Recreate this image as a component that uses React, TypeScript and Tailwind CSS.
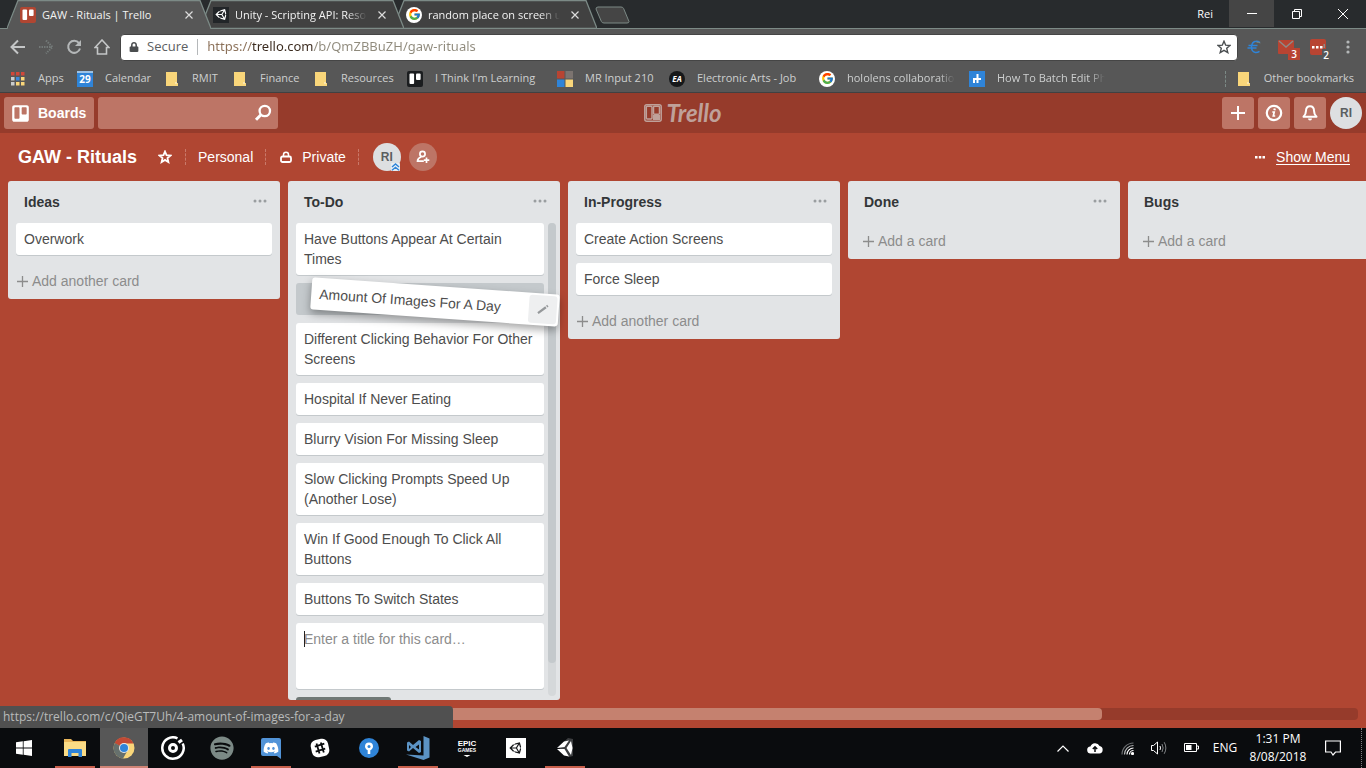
import React from 'react';
import { FaTrello, FaUnity, FaSpotify, FaDiscord, FaLock } from 'react-icons/fa';
import { FcGoogle } from 'react-icons/fc';

const UI_FONT = "font-['Open_Sans','Noto_Sans',sans-serif]";

function FolderIcon() {
  return (
    <svg width="12" height="14" viewBox="0 0 12 14" className="shrink-0">
      <path d="M0 0h11v11h1v3H0z" fill="#f9d67a" />
      <path d="M9 10h2v2h-2z" fill="#fbe6ae" />
    </svg>
  );
}

function TrelloTile({ dark = false }: { dark?: boolean }) {
  return (
    <svg width="16" height="16" viewBox="0 0 16 16" className="shrink-0">
      <rect width="16" height="16" rx="2" fill={dark ? '#1b1d1f' : '#b04632'} />
      <rect x="2.5" y="2.5" width="4.6" height="10.5" rx="1" fill="#fff" />
      <rect x="9" y="2.5" width="4.6" height="6.5" rx="1" fill="#fff" />
    </svg>
  );
}

function GoogleTile() {
  return (
    <span className="flex size-4 shrink-0 items-center justify-center rounded-full bg-white">
      <FcGoogle size={13} />
    </span>
  );
}

type TabData = { title: string; icon: React.ReactNode; active?: boolean; layer: string };

const tabs: TabData[] = [
  { title: 'GAW - Rituals | Trello', icon: <TrelloTile />, active: true, layer: 'z-30' },
  {
    title: 'Unity - Scripting API: Resources',
    icon: (
      <span className="flex size-4 shrink-0 items-center justify-center bg-[#222528] text-white">
        <FaUnity size={13} />
      </span>
    ),
    layer: 'z-20 -ml-[11px]',
  },
  { title: 'random place on screen unity', icon: <GoogleTile />, layer: 'z-10 -ml-[11px]' },
];

function Tab({ title, icon, active, layer }: TabData) {
  return (
    <div className={`relative flex h-full w-[204px] items-center pl-[13px] pr-4 ${layer}`}>
      <svg className="absolute inset-0" width="204" height="29" viewBox="0 0 204 29">
        <path d="M0 29L1 28 11 0.5H193L203.500 28.500V29z" fill={active ? '#575757' : '#414141'} />
        <path
          d={active ? 'M0 28.500L11 0.500H193L204 28.500' : 'M0 28.500L11 0.500H193L204 28.500H0'}
          fill="none"
          stroke="#7c8a86"
          strokeWidth="1.3"
        />
      </svg>
      <div className="relative flex min-w-0 flex-1 items-center">
        {icon}
        <a
          href="#"
          className={`ml-1.5 w-[132px] overflow-hidden whitespace-nowrap text-[11px] leading-4 text-[#f2f2f2] ${active ? '' : 'mask-r-from-85%'}`}
        >
          {title}
        </a>
        <button aria-label="Close tab" className="ml-auto flex h-4 w-3 items-center justify-center">
          <svg width="8" height="8" viewBox="0 0 8 8" stroke="#dcdcdc" strokeWidth="1.2">
            <path d="M0.500 0.500l7 7M7.500 0.500l-7 7" />
          </svg>
        </button>
      </div>
    </div>
  );
}

function TabStrip() {
  return (
    <div className="relative flex h-[29px] items-center bg-[#282b2d] pl-[7px]">
      <div className="absolute inset-x-0 bottom-0 h-px bg-[#7c8a86]" />
      {tabs.map((t) => (
        <Tab key={t.title} {...t} />
      ))}
      <button aria-label="New tab" className="-ml-0.5">
        <svg width="35" height="18" viewBox="0 0 35 18">
          <path d="M3 1h23q2 0 2.600 1.500l5.400 13q0 1.500-2 1.500H9q-2 0-2.600-1.500L1 3q0-2 2-2z" fill="#454545" stroke="#7c8a86" />
        </svg>
      </button>
      <div className="ml-auto flex h-full items-start text-white">
        <button className="mr-4 h-7 text-[11px]">Rei</button>
        <button aria-label="Minimize" className="flex h-[27px] w-[45px] items-center justify-center bg-[#454545]">
          <svg width="10" height="10" viewBox="0 0 10 10" stroke="#fff">
            <path d="M0 4.500h10" />
          </svg>
        </button>
        <button aria-label="Restore" className="flex h-[27px] w-[46px] items-center justify-center">
          <svg width="10" height="10" viewBox="0 0 10 10" stroke="#fff" fill="none">
            <path d="M0.500 2.500h7v7h-7zM2.500 2.500v-2h7v7h-2" />
          </svg>
        </button>
        <button aria-label="Close" className="flex h-[27px] w-[46px] items-center justify-center">
          <svg width="10" height="10" viewBox="0 0 10 10" stroke="#fff">
            <path d="M0 0l10 10M10 0L0 10" />
          </svg>
        </button>
      </div>
    </div>
  );
}

function Toolbar() {
  const nav = 'flex size-7 items-center justify-center';
  return (
    <div className="flex h-9 items-center bg-[#575757] pl-1 pr-1">
      <button aria-label="Back" className={nav}>
        <svg width="16" height="16" viewBox="0 0 16 16" fill="none" stroke="#c4c6c7" strokeWidth="2">
          <path d="M15 8H2M8 1.500L1.500 8 8 14.500" />
        </svg>
      </button>
      <button aria-label="Forward" className={nav}>
        <svg width="16" height="16" viewBox="0 0 16 16" fill="none" stroke="#737978" strokeWidth="2">
          <path d="M1 8h13M8 1.500L14.500 8 8 14.500" strokeDasharray="1.500 1" />
        </svg>
      </button>
      <button aria-label="Reload" className={nav}>
        <svg width="16" height="16" viewBox="0 0 16 16" fill="none" stroke="#b4b7b8" strokeWidth="2">
          <path d="M13 4.200A6 6 0 1 0 14 9.500" />
          <path d="M15 1v6H9z" fill="#b4b7b8" stroke="none" />
        </svg>
      </button>
      <button aria-label="Home" className={nav}>
        <svg width="16" height="16" viewBox="0 0 16 16" fill="none" stroke="#c4c6c7" strokeWidth="1.6">
          <path d="M8 1L1 8.500h2.500V15h9V8.500H15z" />
        </svg>
      </button>
      <div className="ml-1 flex h-[27px] min-w-0 flex-1 items-center rounded-sm border border-[#454545] bg-white pl-2 pr-1.5">
        <FaLock size={10} color="#4a4d4f" />
        <label htmlFor="url" className="ml-2 text-[13px] text-[#5c6062]">
          Secure
        </label>
        <span className="mx-[9px] h-4 w-px bg-[#b5b8ba]" />
        <input
          id="url"
          type="text"
          defaultValue="https://trello.com/b/QmZBBuZH/gaw-rituals"
          className="min-w-0 flex-1 bg-[linear-gradient(90deg,#8a6f57_45px,#3a2a1e_45px,#3a2a1e_106px,#8f8a7c_106px)] bg-clip-text font-['Noto_Sans',sans-serif] text-[13px] text-transparent outline-none"
        />
        <button aria-label="Bookmark this page">
          <svg width="14" height="14" viewBox="0 0 14 14" fill="none" stroke="#4a4e50" strokeWidth="1.400">
            <path d="M7 1.200l1.700 4 4.300.3-3.300 2.800 1.100 4.300L7 10.300l-3.800 2.300 1.100-4.300L1 5.500l4.300-.3z" />
          </svg>
        </button>
      </div>
      <div className="flex h-full items-center">
        <button aria-label="Currency converter" className="flex w-8 justify-center">
          <svg width="14" height="14" viewBox="0 0 14 14" fill="none" stroke="#2f84d8" strokeWidth="1.500">
            <path d="M13 2.500Q11 1 9 1.200 4.800 1.500 4.500 7q.2 5 4 5.500 2 .2 4-1.200M1.500 5.500h9M0.500 8h9" />
            <path d="M13.300 3Q11 1.800 9.500 2.200" stroke="#7c8a86" strokeWidth="1" />
          </svg>
        </button>
        <button aria-label="Mail, 3 unread" className="relative flex w-8 justify-center">
          <svg width="16" height="14" viewBox="0 0 16 14">
            <rect width="16" height="14" rx="1" fill="#b84432" />
            <path d="M1 1l7 6 7-6" fill="none" stroke="#8f8a86" strokeWidth="1.500" />
          </svg>
          <span className="absolute -bottom-1.5 right-0.5 h-3 w-3 bg-[#b84432] text-center text-[10px] font-semibold leading-3 text-white">3</span>
        </button>
        <button aria-label="Messages, 2 new" className="relative flex w-8 justify-center">
          <svg width="16" height="16" viewBox="0 0 16 16">
            <rect width="16" height="16" rx="2" fill="#b84432" />
            <path d="M2 7h2.500v2.500H2zM6 7h2.500v2.500H6zM10 7h2.500v2.500H10z" fill="#fff" />
            <path d="M13.500 5h1.500v4h-1.500z" fill="#8f8a86" />
          </svg>
          <span className="absolute -bottom-1.5 right-1 h-3 w-2 bg-[#575757] text-center text-[10px] font-semibold leading-3 text-white">2</span>
        </button>
        <button aria-label="Menu" className="flex w-7 justify-center">
          <svg width="4" height="14" viewBox="0 0 4 14" fill="#b4b7b8">
            <circle cx="2" cy="2" r="1.600" />
            <circle cx="2" cy="7" r="1.600" />
            <circle cx="2" cy="12" r="1.600" />
          </svg>
        </button>
      </div>
    </div>
  );
}

const appsColors = ['#d0483a', '#d0483a', '#d0483a', '#c9cccd', '#3b86d8', '#f9d67a', '#c9cccd', '#f9d67a', '#f9d67a'];

const bookmarks: { label: string; icon: React.ReactNode; width: string; gap: string; fade?: boolean }[] = [
  {
    label: 'Apps',
    icon: (
      <svg width="14" height="14" viewBox="0 0 14 14" className="shrink-0">
        {appsColors.map((c, i) => (
          <rect key={i} x={(i % 3) * 5} y={Math.floor(i / 3) * 5} width="3.500" height="3.500" fill={c} />
        ))}
      </svg>
    ),
    width: 'w-[66px]',
    gap: 'gap-[13px]',
  },
  {
    label: 'Calendar',
    icon: (
      <span className="flex size-4 shrink-0 items-center justify-center border-t-2 border-[#9dc3e6] bg-[#2f84d8] text-[10px] font-bold text-white">29</span>
    ),
    width: 'w-[89px]',
    gap: 'gap-3',
  },
  { label: 'RMIT', icon: <FolderIcon />, width: 'w-[68px]', gap: 'gap-3.5' },
  { label: 'Finance', icon: <FolderIcon />, width: 'w-[81px]', gap: 'gap-3.5' },
  { label: 'Resources', icon: <FolderIcon />, width: 'w-[92px]', gap: 'gap-3.5' },
  { label: "I Think I'm Learning", icon: <TrelloTile dark />, width: 'w-[150px]', gap: 'gap-3' },
  {
    label: 'MR Input 210',
    icon: (
      <svg width="16" height="16" viewBox="0 0 16 16" className="shrink-0">
        <path d="M0 0h7.500v7.500H0z" fill="#b84432" />
        <path d="M8.500 0H16v7.500H8.500z" fill="#7c7470" />
        <path d="M0 8.500h7.500V16H0z" fill="#2f84d8" />
        <path d="M8.500 8.500H16V16H8.500z" fill="#f9d67a" />
      </svg>
    ),
    width: 'w-28',
    gap: 'gap-3',
  },
  {
    label: 'Electronic Arts - Job',
    icon: (
      <span className="flex size-4 shrink-0 items-center justify-center rounded-full bg-[#16181a] text-[8px] font-bold italic text-white">EA</span>
    ),
    width: 'w-[150px]',
    gap: 'gap-3',
  },
  { label: 'hololens collaboration', icon: <GoogleTile />, width: 'w-[150px]', gap: 'gap-3', fade: true },
  {
    label: 'How To Batch Edit Photos',
    icon: (
      <svg width="16" height="16" viewBox="0 0 16 16" className="shrink-0">
        <path d="M0 0h16v16H0z" fill="#2f84d8" />
        <path d="M8.500 3v9M4 8h8M5 12V8" fill="none" stroke="#fff" strokeWidth="2" />
      </svg>
    ),
    width: 'w-[150px]',
    gap: 'gap-3',
    fade: true,
  },
];

function BookmarksBar() {
  return (
    <div className="flex h-7 items-center border-b border-[#404142] bg-[#575757] pl-[11px] pr-3 text-[11px] text-[#cdcfcf]">
      {bookmarks.map((b) => (
        <a key={b.label} href="#" className={`flex shrink-0 items-center whitespace-nowrap ${b.width} ${b.gap}`}>
          {b.icon}
          <span className={b.fade ? 'w-[108px] overflow-hidden mask-r-from-85%' : ''}>{b.label}</span>
        </a>
      ))}
      <div className="ml-auto flex items-center">
        <span className="mr-3 h-4 border-l border-dashed border-[#7c8a86]" />
        <a href="#" className="flex items-center gap-3.5 whitespace-nowrap">
          <FolderIcon />
          Other bookmarks
        </a>
      </div>
    </div>
  );
}

function TrelloHeader() {
  const btn = 'flex size-8 items-center justify-center rounded-[3px] bg-[#bd7566] text-white';
  return (
    <header className="flex h-10 items-center bg-[#963b2b] px-1">
      <div className="flex flex-1 gap-1">
        <button className="flex h-8 w-[90px] items-center gap-2 rounded-[3px] bg-[#bd7566] pl-[7px] text-[14px] font-bold text-white">
          <FaTrello size={19} />
          Boards
        </button>
        <label className="flex h-8 w-[180px] items-center rounded-[3px] bg-[#bd7566] pr-1.5">
          <input type="text" aria-label="Search" className="min-w-0 flex-1 bg-transparent px-2 text-[14px] text-white outline-none" />
          <svg width="18" height="18" viewBox="0 0 18 18" fill="none" stroke="#fff">
            <circle cx="10.800" cy="7" r="5.200" strokeWidth="2.300" />
            <path d="M7 10.800L2 15.800" strokeWidth="3" />
          </svg>
        </label>
      </div>
      <a href="#" className="flex items-center gap-1 text-[#bfa19a]">
        <svg width="18" height="18" viewBox="0 0 18 18" fill="none" stroke="#bfa19a" strokeWidth="1.500">
          <rect x="0.800" y="0.800" width="16.400" height="16.400" rx="2" />
          <rect x="2.300" y="2.300" width="5.700" height="12.700" rx="1" />
          <rect x="9.500" y="2.300" width="6" height="8" rx="1" />
          <path d="M9 11h7v5H9z" fill="#bfa19a" stroke="none" />
        </svg>
        <span className="font-['Lato','Liberation_Sans',sans-serif] text-[24px] font-bold italic leading-6">Trello</span>
      </a>
      <div className="flex flex-1 justify-end gap-1">
        <button aria-label="Create" className={btn}>
          <svg width="14" height="14" viewBox="0 0 14 14" stroke="#fff" strokeWidth="2">
            <path d="M7 0v14M0 7h14" />
          </svg>
        </button>
        <button aria-label="Information" className={btn}>
          <svg width="18" height="18" viewBox="0 0 18 18" fill="none" stroke="#fff">
            <circle cx="9" cy="9" r="7.200" strokeWidth="2.200" />
            <path d="M9.800 4.500l-.4 1.700" strokeWidth="2.200" />
            <path d="M7.300 8h1.900l-.9 4h1.900" strokeWidth="1.700" />
          </svg>
        </button>
        <button aria-label="Notifications" className={btn}>
          <svg width="18" height="18" viewBox="0 0 18 18">
            <path d="M9 2.200c-3 0-4 2.100-4 4.600 0 3.200-.9 4.400-2.500 6h13c-1.600-1.600-2.500-2.800-2.500-6 0-2.500-1-4.600-4-4.600z" fill="none" stroke="#fff" strokeWidth="2" strokeLinejoin="round" />
            <path d="M7 14.500h4a2 2 0 0 1-4 0z" fill="#fff" />
          </svg>
        </button>
        <button className="flex size-8 items-center justify-center rounded-full bg-[#dddfe1] text-[12px] font-bold text-[#5a5e60]">RI</button>
      </div>
    </header>
  );
}

function BoardHeader() {
  const rule = 'h-4 border-l border-dashed border-[#c9796a]';
  return (
    <div className="flex h-12 items-center px-4 text-[14px] text-white">
      <h1 className="ml-0.5 text-[18px] font-bold">GAW - Rituals</h1>
      <button aria-label="Star board" className="ml-[21px]">
        <svg width="14" height="14" viewBox="0 0 14 14" fill="none" stroke="#fff" strokeWidth="1.800">
          <path d="M7 1.500l1.500 3.700 4 .3-3 2.600.9 3.900L7 9.900l-3.400 2.100.9-3.900-3-2.600 4-.3z" />
        </svg>
      </button>
      <span className={`ml-[13px] ${rule}`} />
      <button className="ml-3">Personal</button>
      <span className={`ml-3 ${rule}`} />
      <button className="ml-3.5 flex items-center gap-2.5">
        <svg width="12" height="12" viewBox="0 0 12 12" fill="none" stroke="#fff">
          <rect x="1" y="5.500" width="10" height="5.500" rx="1.500" strokeWidth="1.800" />
          <path d="M3.500 5V3.800a2.500 2.500 0 0 1 5 0V5" strokeWidth="1.500" />
        </svg>
        Private
      </button>
      <span className={`ml-3 ${rule}`} />
      <button className="relative ml-3.5 flex size-7 items-center justify-center rounded-full bg-[#dddfe1] text-[12px] font-bold text-[#5a5e60]">
        RI
        <svg width="9" height="8" viewBox="0 0 9 8" fill="none" stroke="#2f84d8" strokeWidth="1.400" className="absolute bottom-0 right-px rounded-[1px] bg-[#e8eef4]">
          <path d="M1 4l3.500-3L8 4M1 7.300l3.500-3 3.500 3" />
        </svg>
      </button>
      <button aria-label="Add members" className="ml-2 flex size-7 items-center justify-center rounded-full bg-[#bd7566]">
        <svg width="14" height="14" viewBox="0 0 14 14" fill="none" stroke="#fff" strokeWidth="1.700">
          <circle cx="6.500" cy="4" r="2.600" />
          <path d="M5.300 6.800c-2.300 1-3.800 2.200-3.800 4.400h6.300" />
          <path d="M10.500 7.500v5.500M7.800 10.200h5.500" />
        </svg>
      </button>
      <a href="#" className="ml-auto flex items-center gap-[11px]">
        <svg width="10" height="3" viewBox="0 0 10 3" fill="#fff">
          <path d="M0 0h2.500v2.500H0zM3.800 0h2.500v2.500H3.800zM7.500 0H10v2.500H7.500z" />
        </svg>
        <span className="underline underline-offset-2">Show Menu</span>
      </a>
    </div>
  );
}

function Card({ children }: { children: React.ReactNode }) {
  return (
    <a href="#" className="block shrink-0 rounded-[3px] bg-white px-2 py-1.5 text-[14px] leading-5 text-[#4d4d4d] shadow-[0_1px_0_#c4c9cc]">
      {children}
    </a>
  );
}

function ListHeader({ title, menu = true }: { title: string; menu?: boolean }) {
  return (
    <div className="flex h-[42px] shrink-0 items-center justify-between pl-4 pr-[13px]">
      <h2 className="text-[14px] font-bold text-[#333638]">{title}</h2>
      {menu && (
        <button aria-label={`${title} list actions`} className="pb-0.5">
          <svg width="14" height="4" viewBox="0 0 14 4" fill="#9a9ea0">
            <circle cx="2" cy="2" r="1.500" />
            <circle cx="7" cy="2" r="1.500" />
            <circle cx="12" cy="2" r="1.500" />
          </svg>
        </button>
      )}
    </div>
  );
}

function List({ title, cards, menu }: { title: string; cards: string[]; menu?: boolean }) {
  return (
    <section className="flex max-h-full w-[272px] shrink-0 flex-col rounded-[3px] bg-[#e2e4e6]">
      <ListHeader title={title} menu={menu} />
      <div className="flex flex-col gap-2 px-2">
        {cards.map((c) => (
          <Card key={c}>{c}</Card>
        ))}
      </div>
      <button className={`flex h-9 items-center gap-1 text-[14px] text-[#8c8c8c] ${cards.length ? 'mt-2 px-[9px]' : 'px-[15px]'}`}>
        <svg width="11" height="11" viewBox="0 0 11 11" stroke="#8c8c8c" strokeWidth="1.300">
          <path d="M5.500 0v11M0 5.500h11" />
        </svg>
        {cards.length ? 'Add another card' : 'Add a card'}
      </button>
    </section>
  );
}

const todoAfter = [
  'Different Clicking Behavior For Other Screens',
  'Hospital If Never Eating',
  'Blurry Vision For Missing Sleep',
  'Slow Clicking Prompts Speed Up (Another Lose)',
  'Win If Good Enough To Click All Buttons',
  'Buttons To Switch States',
];

function TodoList() {
  return (
    <section className="relative flex max-h-full w-[272px] shrink-0 flex-col rounded-[3px] bg-[#e2e4e6]">
      <ListHeader title="To-Do" />
      <div className="flex min-h-0 flex-1 gap-1 pl-2 pr-1">
        <div className="flex min-w-0 flex-1 flex-col gap-2 overflow-hidden">
          <Card>Have Buttons Appear At Certain Times</Card>
          <div className="h-8 shrink-0 rounded-[3px] bg-[#c4c9cc]" />
          {todoAfter.map((c) => (
            <Card key={c}>{c}</Card>
          ))}
          <div className="relative shrink-0">
            <textarea
              aria-label="Card title"
              placeholder="Enter a title for this card…"
              className="block h-[66px] w-full resize-none rounded-[3px] bg-white px-2 py-1.5 text-[14px] leading-5 text-[#4d4d4d] shadow-[0_1px_0_#c4c9cc] outline-none placeholder:text-[#8c8c8c]"
            />
            <span className="absolute left-2 top-2 h-4 w-px bg-[#222]" />
          </div>
          <button aria-label="Add card" className="h-8 w-[95px] shrink-0 rounded-[3px] bg-[#6f7775]" />
        </div>
        <div className="mb-1 w-2 rounded-full bg-[#d5d8da]">
          <div className="h-[93%] rounded-full bg-[#c4c9cc]" />
        </div>
      </div>
      <div className="absolute left-[23px] top-[105px] z-10 flex h-8 w-[248px] rotate-4 items-center rounded-[3px] bg-white pl-2 pr-0.5 shadow-[0_4px_8px_rgba(0,0,0,0.35)]">
        <a href="#" className="flex-1 text-[14px] text-[#4d4d4d]">
          Amount Of Images For A Day
        </a>
        <button aria-label="Edit card" className="flex h-7 w-7 items-center justify-center rounded-[3px] bg-[#eeeff0]">
          <svg width="12" height="12" viewBox="0 0 12 12" stroke="#96999b" strokeWidth="2.200">
            <path d="M1.500 10l7.500-6.500M9.800 2.800l1-1" />
          </svg>
        </button>
      </div>
    </section>
  );
}

function Board() {
  return (
    <main className="relative flex min-h-0 flex-1 flex-col bg-[#b04632] font-['Liberation_Sans',Arial,sans-serif]">
      <TrelloHeader />
      <BoardHeader />
      <div className="flex min-h-0 flex-1 items-start gap-2 overflow-hidden px-2">
        <List title="Ideas" cards={['Overwork']} />
        <TodoList />
        <List title="In-Progress" cards={['Create Action Screens', 'Force Sleep']} />
        <List title="Done" cards={[]} />
        <List title="Bugs" cards={[]} menu={false} />
      </div>
      <div className="mx-2 my-2 h-3 rounded-[4px] bg-[#963b2b]">
        <div className="h-full w-[81%] rounded-[4px] bg-[#c5816f]" />
      </div>
      <div className={`absolute bottom-0 left-0 flex h-[22px] w-[453px] items-center rounded-tr-sm bg-[#505050] px-[3px] text-[12px] text-[#b9bbbb] ${UI_FONT}`}>
        https://trello.com/c/QieGT7Uh/4-amount-of-images-for-a-day
      </div>
    </main>
  );
}

const launchers: { name: string; icon: React.ReactNode; state?: string }[] = [
  {
    name: 'File Explorer',
    icon: (
      <svg width="22" height="20" viewBox="0 0 22 20">
        <path d="M0 1h7l2 2h13v15H0z" fill="#e9b65a" />
        <path d="M0 4h22v14H0z" fill="#fadb85" />
        <path d="M4 19v-7q0-1 1-1h12q1 0 1 1v7h-3.500v-4h-7v4z" fill="#2f84d8" />
      </svg>
    ),
    state: 'open',
  },
  {
    name: 'Chrome',
    icon: (
      <svg width="22" height="22" viewBox="0 0 22 22">
        <circle cx="11" cy="11" r="10.500" fill="#f9d67a" />
        <path d="M11 11L1.500 6.200A10.500 10.500 0 0 1 20.500 6.500H11z" fill="#c24a35" />
        <path d="M11 11L1.800 6A10.500 10.500 0 0 0 10 21.500l4.500-8z" fill="#66706d" />
        <circle cx="11" cy="11" r="5" fill="#e8e8e8" />
        <circle cx="11" cy="11" r="4" fill="#2f84d8" />
      </svg>
    ),
    state: 'active',
  },
  {
    name: 'Groove Music',
    icon: (
      <svg width="24" height="24" viewBox="0 0 24 24" fill="none" stroke="#fff">
        <path d="M16.500 2.300A10.700 10.700 0 1 0 21.700 7.500" strokeWidth="2.500" />
        <circle cx="12" cy="12" r="3.500" strokeWidth="3" />
        <path d="M17.500 6.500l3.500-2.500" strokeWidth="3.200" />
      </svg>
    ),
  },
  { name: 'Spotify', icon: <FaSpotify size={24} color="#7c8a86" /> },
  {
    name: 'Discord',
    icon: (
      <svg width="20" height="21" viewBox="0 0 20 21">
        <path d="M2 0h16q2 0 2 2v19l-4-3H2q-2 0-2-2V2q0-2 2-2z" fill="#5294d8" />
        <FaDiscord x={2} y={2} size={16} color="#fff" />
      </svg>
    ),
    state: 'open',
  },
  {
    name: 'Slack',
    icon: (
      <svg width="20" height="20" viewBox="0 0 20 20">
        <rect x="1.200" y="1.200" width="17.600" height="17.600" rx="6" fill="#fff" transform="rotate(-12 10 10)" />
        <path d="M6.500 5.500l3 10M10.800 4.500l3 10M4.800 8.700l9.500-3M5.700 13.700l9.500-3" stroke="#0a0c0e" strokeWidth="1.800" />
      </svg>
    ),
  },
  {
    name: 'Maps',
    icon: (
      <svg width="20" height="20" viewBox="0 0 20 20">
        <circle cx="10" cy="10" r="10" fill="#2f84d8" />
        <path d="M10 4.500a4 4 0 0 0-4 4c0 2 1.500 3 2.700 3.800V16h2.600v-3.700C12.500 11.500 14 10.500 14 8.500a4 4 0 0 0-4-4z" fill="#fff" />
        <circle cx="10" cy="8.500" r="1.500" fill="#2f84d8" />
      </svg>
    ),
  },
  {
    name: 'Visual Studio Code',
    icon: (
      <svg width="24" height="24" viewBox="0 0 24 24" fill="#5b93c4">
        <path d="M17.500 0l6 2.500v19L17.500 24 0 18.500l17.500 1z" />
        <path d="M1 6.500l2-1 4 3.500 6-5 2 1v11l-2 1-6-5-4 3.500-2-1zm2 2.500v4l2-2zm10-.500L9.500 11l3.500 2.500z" fillRule="evenodd" />
      </svg>
    ),
    state: 'open',
  },
  {
    name: 'Epic Games',
    icon: (
      <svg width="20" height="22" viewBox="0 0 20 22" fill="#fff" textAnchor="middle">
        <text x="10" y="9" fontSize="8" fontWeight="700" fontFamily="'Liberation Sans', sans-serif">EPIC</text>
        <text x="10" y="15" fontSize="5" fontWeight="700" fontFamily="'Liberation Sans', sans-serif">GAMES</text>
        <path d="M6.500 18h7L10 20z" />
      </svg>
    ),
  },
  {
    name: 'Unity Hub',
    icon: (
      <span className="flex size-5 items-center justify-center bg-white text-[#16181a]">
        <FaUnity size={14} />
      </span>
    ),
  },
  {
    name: 'Unity',
    icon: (
      <svg width="20" height="20" viewBox="0 0 20 20">
        <path d="M3 9L13 0l5 1v17l-4 1z" fill="#3c3e40" />
        <path d="M2 10L9 3.500l5-1L9.500 9zM2 11l7 6.500 5 1-4.500-7.500zM11.500 10l4.500-7 1.500 7-1.500 7z" fill="#fff" />
      </svg>
    ),
    state: 'open',
  },
];

function Taskbar() {
  return (
    <footer className="flex h-10 shrink-0 items-center bg-[#0a0c0e] text-white">
      <nav className="flex h-full gap-px">
        <button aria-label="Start" className="flex w-[50px] items-center pl-4">
          <svg width="16" height="16" viewBox="0 0 16 16" fill="#fff">
            <path d="M0 2.300L6.800 1.300V7.600H0zM7.600 1.200L16 0V7.600H7.600zM0 8.400H6.800V14.700L0 13.700zM7.600 8.400H16V16L7.600 14.800z" />
          </svg>
        </button>
        {launchers.map((l) => (
          <button
            key={l.name}
            aria-label={l.name}
            className={`relative flex w-12 items-center justify-center ${l.state === 'active' ? 'bg-[#575757]' : ''}`}
          >
            {l.icon}
            {l.state && (
              <span className={`absolute bottom-0 h-0.5 ${l.state === 'active' ? 'inset-x-0 bg-[#d08476]' : 'inset-x-1 bg-[#c8604c]'}`} />
            )}
          </button>
        ))}
      </nav>
      <div className="ml-auto flex h-full items-center">
        <button aria-label="Show hidden icons" className="flex w-8 justify-center">
          <svg width="12" height="7" viewBox="0 0 12 7" fill="none" stroke="#fff" strokeWidth="1.200">
            <path d="M0.500 6.500L6 1l5.500 5.500" />
          </svg>
        </button>
        <button aria-label="Cloud sync" className="flex w-8 justify-center">
          <svg width="16" height="12" viewBox="0 0 16 12">
            <path d="M4 11.500a3.500 3.500 0 0 1-.6-7A5 5 0 0 1 12.600 4a3.800 3.800 0 0 1-.3 7.500z" fill="#fff" />
            <path d="M8 10V5.500M5.800 7L8 4.800 10.200 7" fill="none" stroke="#0a0c0e" strokeWidth="1.500" />
          </svg>
        </button>
        <button aria-label="Wi-Fi" className="flex w-8 justify-center">
          <svg width="13" height="13" viewBox="0 0 13 13" fill="none" stroke="#fff" strokeWidth="1.200">
            <path d="M1 12.500A11.500 11.500 0 0 1 12.500 1" stroke="#6b6e70" />
            <path d="M3.500 12.500a9 9 0 0 1 9-9" stroke="#b9bbbc" />
            <path d="M6 12.500A6.500 6.500 0 0 1 12.500 6M8.500 12.500a4 4 0 0 1 4-4" />
            <circle cx="11.500" cy="11.500" r="1" fill="#fff" />
          </svg>
        </button>
        <button aria-label="Volume" className="flex w-8 justify-center">
          <svg width="16" height="14" viewBox="0 0 16 14" fill="none" stroke="#fff">
            <path d="M0.500 4.500h2l4-3.500v12l-4-3.500h-2z" />
            <path d="M9 5q1 2 0 4" />
            <path d="M11 3q2.300 4 0 8M13.200 1.200q3.300 5.800 0 11.600" stroke="#808385" />
          </svg>
        </button>
        <button aria-label="Battery" className="flex w-8 justify-center">
          <svg width="15" height="10" viewBox="0 0 15 10">
            <path d="M0.500 0.500h12v8h-12zM13 3h1.500v3H13" fill="none" stroke="#fff" />
            <path d="M2 2h5.500v5H2z" fill="#fff" />
          </svg>
        </button>
        <button className="ml-1 w-7 text-[12px]">ENG</button>
        <button className="ml-2 w-[62px] whitespace-nowrap text-center text-[12px] leading-[18px]">
          1:31 PM
          <br />
          8/08/2018
        </button>
        <button aria-label="Notifications" className="mx-4 flex">
          <svg width="16" height="16" viewBox="0 0 16 16" fill="none" stroke="#fff" strokeWidth="1.200">
            <path d="M0.600 1h14.800v11H10.500L8 15l-2-3H0.600z" />
          </svg>
        </button>
        <span className="ml-1 mr-1 h-full border-l border-dotted border-[#7c7f80]" />
      </div>
    </footer>
  );
}

export default function App() {
  return (
    <div className={`flex h-screen flex-col overflow-hidden ${UI_FONT}`}>
      <TabStrip />
      <Toolbar />
      <BookmarksBar />
      <Board />
      <Taskbar />
    </div>
  );
}
